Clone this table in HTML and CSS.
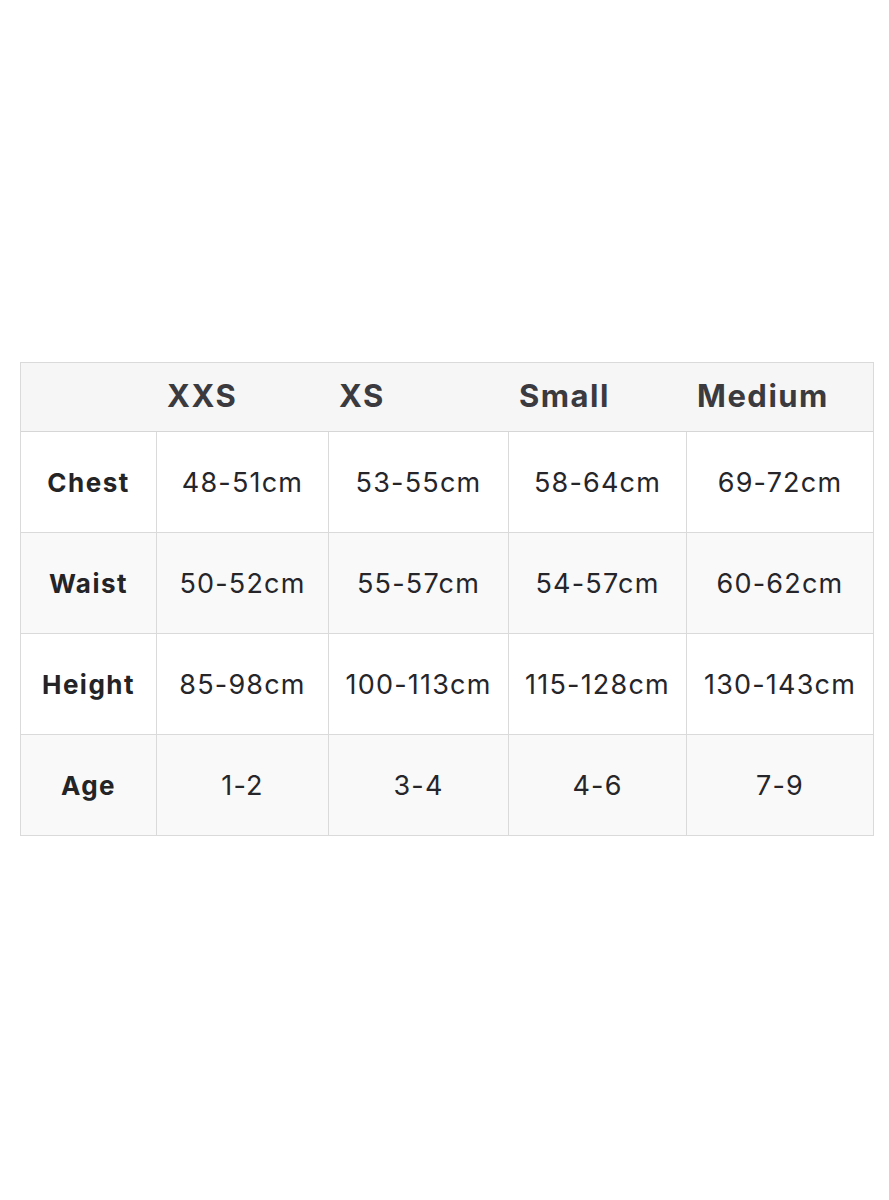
FILE: index.html
```html
<!DOCTYPE html>
<html lang="en">
<head>
<meta charset="utf-8">
<title>Size chart</title>
<link rel="stylesheet" href="styles.css">
</head>
<body>
<div class="page">
  <div class="chart">
    <div class="row head">
      <div class="cell"></div>
      <div class="cell h">XXS</div>
      <div class="cell h">XS</div>
      <div class="cell h">Small</div>
      <div class="cell h">Medium</div>
    </div>
    <div class="row">
      <div class="cell label">Chest</div>
      <div class="cell v">48-51cm</div>
      <div class="cell v">53-55cm</div>
      <div class="cell v">58-64cm</div>
      <div class="cell v">69-72cm</div>
    </div>
    <div class="row alt">
      <div class="cell label">Waist</div>
      <div class="cell v">50-52cm</div>
      <div class="cell v">55-57cm</div>
      <div class="cell v">54-57cm</div>
      <div class="cell v">60-62cm</div>
    </div>
    <div class="row">
      <div class="cell label">Height</div>
      <div class="cell v">85-98cm</div>
      <div class="cell v">100-113cm</div>
      <div class="cell v">115-128cm</div>
      <div class="cell v">130-143cm</div>
    </div>
    <div class="row alt last">
      <div class="cell label">Age</div>
      <div class="cell v">1-2</div>
      <div class="cell v">3-4</div>
      <div class="cell v">4-6</div>
      <div class="cell v">7-9</div>
    </div>
  </div>
</div>
</body>
</html>
```

FILE: styles.css
```css
html, body {
  margin: 0;
  padding: 0;
  background: #ffffff;
}

body {
  font-family: "Inter", "Liberation Sans", sans-serif;
  color: #262628;
}

.page {
  padding: 362px 15px 0 20px;
}

.chart {
  width: 854px;
  box-sizing: border-box;
  border: 1px solid #dadada;
}

.row {
  display: grid;
  grid-template-columns: 135px 172px 180px 178px 187px;
  height: 100px;
  border-bottom: 1px solid #dadada;
  background: #ffffff;
}

.row.alt {
  background: #f9f9f9;
}

.row.last {
  border-bottom: none;
}

.row.head {
  height: 68px;
  background: #f6f6f6;
  border-bottom: 1px solid #d6d6d6;
}

.cell {
  display: flex;
  align-items: center;
  justify-content: center;
  border-left: 1px solid #dadada;
}

.cell:first-child {
  border-left: none;
}

.head .cell {
  border-left: none;
  justify-content: flex-start;
  padding-left: 11px;
}

.h {
  font-size: 31px;
  font-weight: 700;
  letter-spacing: 1.5px;
  color: #3a3a3f;
  padding-bottom: 3px;
}

.label {
  font-size: 26px;
  font-weight: 700;
  letter-spacing: 1.5px;
  color: #242427;
}

.v {
  font-size: 27px;
  font-weight: 400;
  letter-spacing: 1.2px;
  color: #26262a;
}
```
